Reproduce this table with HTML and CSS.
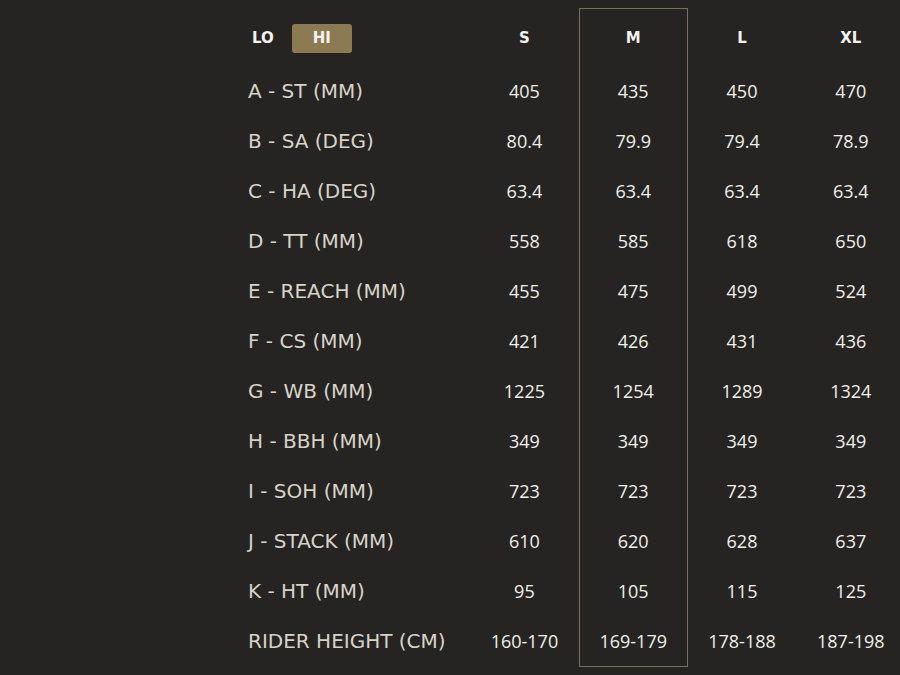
FILE: index.html
```html
<!DOCTYPE html>
<html>
<head>
<meta charset="utf-8">
<link rel="stylesheet" href="styles.css">
</head>
<body>
<div class="geo">
  <div class="col labels">
    <div class="head toggle">
      <span class="lo">LO</span>
      <span class="hi">HI</span>
    </div>
    <div class="cell">A - ST (MM)</div>
    <div class="cell">B - SA (DEG)</div>
    <div class="cell">C - HA (DEG)</div>
    <div class="cell">D - TT (MM)</div>
    <div class="cell">E - REACH (MM)</div>
    <div class="cell">F - CS (MM)</div>
    <div class="cell">G - WB (MM)</div>
    <div class="cell">H - BBH (MM)</div>
    <div class="cell">I - SOH (MM)</div>
    <div class="cell">J - STACK (MM)</div>
    <div class="cell">K - HT (MM)</div>
    <div class="cell">RIDER HEIGHT (CM)</div>
  </div>
  <div class="col size">
    <div class="head">S</div>
    <div class="cell">405</div><div class="cell">80.4</div><div class="cell">63.4</div><div class="cell">558</div><div class="cell">455</div><div class="cell">421</div><div class="cell">1225</div><div class="cell">349</div><div class="cell">723</div><div class="cell">610</div><div class="cell">95</div><div class="cell">160-170</div>
  </div>
  <div class="col size active">
    <div class="head">M</div>
    <div class="cell">435</div><div class="cell">79.9</div><div class="cell">63.4</div><div class="cell">585</div><div class="cell">475</div><div class="cell">426</div><div class="cell">1254</div><div class="cell">349</div><div class="cell">723</div><div class="cell">620</div><div class="cell">105</div><div class="cell">169-179</div>
  </div>
  <div class="col size">
    <div class="head">L</div>
    <div class="cell">450</div><div class="cell">79.4</div><div class="cell">63.4</div><div class="cell">618</div><div class="cell">499</div><div class="cell">431</div><div class="cell">1289</div><div class="cell">349</div><div class="cell">723</div><div class="cell">628</div><div class="cell">115</div><div class="cell">178-188</div>
  </div>
  <div class="col size">
    <div class="head">XL</div>
    <div class="cell">470</div><div class="cell">78.9</div><div class="cell">63.4</div><div class="cell">650</div><div class="cell">524</div><div class="cell">436</div><div class="cell">1324</div><div class="cell">349</div><div class="cell">723</div><div class="cell">637</div><div class="cell">125</div><div class="cell">187-198</div>
  </div>
</div>
</body>
</html>
```
FILE: styles.css
```css
html, body {
  margin: 0;
  padding: 0;
  background: #252422;
  width: 900px;
  height: 675px;
  overflow: hidden;
}
body {
  font-family: "DejaVu Sans", sans-serif;
}
.geo {
  display: flex;
  padding: 8px 0 0 248px;
}
.col {
  display: flex;
  flex-direction: column;
  flex-shrink: 0;
}
.labels {
  width: 222px;
}
.size {
  width: 108.8px;
  align-items: center;
}
.active {
  box-sizing: border-box;
  border: 1px solid #7b6f57;
  height: 659px;
}
.active .head {
  margin-top: -1px;
}
.head {
  box-sizing: border-box;
  height: 58px;
  padding-top: 2px;
  display: flex;
  align-items: center;
  font-weight: bold;
  font-size: 15px;
  color: #f4f2ee;
}
.toggle {
  gap: 18px;
  padding-left: 4px;
}
.hi {
  background: #8c7a52;
  width: 60px;
  height: 29px;
  border-radius: 3px;
  display: flex;
  align-items: center;
  justify-content: center;
}
.cell {
  height: 50px;
  display: flex;
  align-items: center;
  font-family: "Open Sans", sans-serif;
  font-size: 18px;
  color: #f1efea;
}
.labels .cell {
  font-family: "DejaVu Sans", sans-serif;
  font-size: 20px;
  color: #d8d3c8;
}
```
